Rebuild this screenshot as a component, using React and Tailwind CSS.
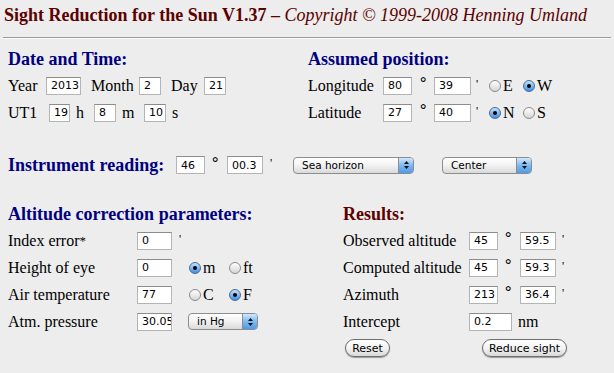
import React from "react";

const inputCls =
  "h-[18px] bg-white border border-[#b4b4b4] border-t-[#8c8c8c] flex items-center pl-[4px] overflow-hidden whitespace-nowrap text-[11px] leading-none text-black font-['DejaVu_Sans',sans-serif] shrink-0";

function Field({ w, v }) {
  return <span className={`${inputCls} ${w}`}>{v}</span>;
}

function Radio({ on }) {
  return on ? (
    <span className="w-[12px] h-[12px] rounded-full border border-[#4a6b96] bg-gradient-to-b from-[#c4e2fb] to-[#3d8fe6] flex items-center justify-center shrink-0">
      <span className="w-[4px] h-[4px] rounded-full bg-black" />
    </span>
  ) : (
    <span className="w-[12px] h-[12px] rounded-full border border-[#8a8a8a] bg-gradient-to-b from-[#ffffff] to-[#d6d6d6] shrink-0" />
  );
}

function Select({ w, v }) {
  return (
    <span
      className={`${w} h-[17px] rounded-[4px] border border-[#8d8d8d] flex items-stretch overflow-hidden shrink-0 bg-gradient-to-b from-[#ffffff] via-[#f2f2f2] to-[#d9d9d9]`}
    >
      <span className="flex-1 flex items-center pl-[8px] text-[10.5px] leading-none text-black font-['DejaVu_Sans',sans-serif] whitespace-nowrap">
        {v}
      </span>
      <span className="w-[15px] border-l border-[#8d8d8d] bg-gradient-to-b from-[#cfe8fd] via-[#7cb9f1] to-[#4e9ae8] flex flex-col items-center justify-center gap-[2px]">
        <svg width="5" height="3" viewBox="0 0 5 3">
          <path d="M2.5 0 L5 3 L0 3 Z" fill="#111" />
        </svg>
        <svg width="5" height="3" viewBox="0 0 5 3">
          <path d="M0 0 L5 0 L2.5 3 Z" fill="#111" />
        </svg>
      </span>
    </span>
  );
}

function Button({ w, v }) {
  return (
    <span
      className={`${w} h-[18px] rounded-full border border-[#6e6e6e] bg-gradient-to-b from-[#ffffff] via-[#f4f4f4] to-[#d8d8d8] flex items-center justify-center text-[11px] leading-none text-black font-['DejaVu_Sans',sans-serif] shadow-[0_1px_1px_rgba(0,0,0,0.35)]`}
    >
      {v}
    </span>
  );
}

const Row = ({ children, h = "h-[27px]" }) => (
  <div className={`flex items-center ${h}`}>{children}</div>
);

export default function App() {
  return (
    <div className="w-[614px] h-[373px] bg-[#ededed] overflow-hidden font-['Liberation_Serif',serif] text-[16px] text-black">
      {/* Title */}
      <div className="h-[37px] pl-[4px] pt-[5px] text-[18px] leading-[21px] text-[#5c0000] whitespace-nowrap">
        <span className="font-bold">Sight Reduction for the Sun V1.37 – </span>
        <span className="italic">Copyright © 1999-2008 Henning Umland</span>
      </div>
      <div className="mx-[3px] border-t border-[#9a9a9a] border-b border-b-[#fafafa]" />

      {/* Top section */}
      <div className="flex pl-[8px] mt-[7px]">
        <div className="w-[300px] flex flex-col">
          <div className="h-[26px] flex items-center text-[18px] font-bold text-[#000080]">
            Date and Time:
          </div>
          <Row>
            <span className="w-[38px]">Year</span>
            <Field w="w-[35px]" v="2013" />
            <span className="ml-[10px] w-[48px]">Month</span>
            <Field w="w-[22px]" v="2" />
            <span className="ml-[10px] w-[33px]">Day</span>
            <Field w="w-[22px]" v="21" />
          </Row>
          <Row>
            <span className="w-[41px]">UT1</span>
            <Field w="w-[21px]" v="19" />
            <span className="ml-[6px] w-[18px]">h</span>
            <Field w="w-[22px]" v="8" />
            <span className="ml-[6px] w-[22px]">m</span>
            <Field w="w-[22px]" v="10" />
            <span className="ml-[6px]">s</span>
          </Row>
        </div>
        <div className="flex flex-col">
          <div className="h-[26px] flex items-center text-[18px] font-bold text-[#000080]">
            Assumed position:
          </div>
          <Row>
            <span className="w-[75px]">Longitude</span>
            <Field w="w-[29px]" v="80" />
            <span className="w-[22px] pl-[8px] self-start pt-[3px] leading-[16px] font-bold">°</span>
            <Field w="w-[37px]" v="39" />
            <span className="w-[18px] pl-[5px] self-start pt-[4px] leading-[16px] text-[12px]">'</span>
            <span className="w-[34px] flex items-center gap-[2px]">
              <Radio />
              <span>E</span>
            </span>
            <span className="flex items-center gap-[2px]">
              <Radio on />
              <span>W</span>
            </span>
          </Row>
          <Row>
            <span className="w-[75px]">Latitude</span>
            <Field w="w-[29px]" v="27" />
            <span className="w-[22px] pl-[8px] self-start pt-[3px] leading-[16px] font-bold">°</span>
            <Field w="w-[37px]" v="40" />
            <span className="w-[18px] pl-[5px] self-start pt-[4px] leading-[16px] text-[12px]">'</span>
            <span className="w-[34px] flex items-center gap-[2px]">
              <Radio on />
              <span>N</span>
            </span>
            <span className="flex items-center gap-[2px]">
              <Radio />
              <span>S</span>
            </span>
          </Row>
        </div>
      </div>

      {/* Instrument reading */}
      <div className="mt-[25px] pl-[8px] h-[28px] flex items-center">
        <span className="w-[168px] text-[18px] font-bold text-[#000080] whitespace-nowrap">
          Instrument reading:
        </span>
        <Field w="w-[29px]" v="46" />
        <span className="w-[22px] pl-[7px] self-start pt-[4px] leading-[16px] font-bold">°</span>
        <Field w="w-[36px]" v="00.3" />
        <span className="w-[30px] pl-[7px] self-start pt-[4px] leading-[16px] text-[12px]">'</span>
        <Select w="w-[121px]" v="Sea horizon" />
        <span className="w-[28px]" />
        <Select w="w-[90px]" v="Center" />
      </div>

      {/* Bottom section */}
      <div className="flex pl-[8px] mt-[22px]">
        <div className="w-[335px] flex flex-col">
          <div className="h-[26px] flex items-center text-[18px] font-bold text-[#000080] whitespace-nowrap">
            Altitude correction parameters:
          </div>
          <Row>
            <span className="w-[129px]">
              Index error<sup className="text-[13px] relative -top-[1px]">*</sup>
            </span>
            <Field w="w-[35px]" v="0" />
            <span className="pl-[7px] self-start pt-[4px] leading-[16px] text-[12px]">'</span>
          </Row>
          <Row>
            <span className="w-[129px]">Height of eye</span>
            <Field w="w-[35px]" v="0" />
            <span className="w-[17px]" />
            <span className="w-[40px] flex items-center gap-[2px]">
              <Radio on />
              <span>m</span>
            </span>
            <span className="flex items-center gap-[2px]">
              <Radio />
              <span>ft</span>
            </span>
          </Row>
          <Row>
            <span className="w-[129px]">Air temperature</span>
            <Field w="w-[35px]" v="77" />
            <span className="w-[17px]" />
            <span className="w-[40px] flex items-center gap-[2px]">
              <Radio />
              <span>C</span>
            </span>
            <span className="flex items-center gap-[2px]">
              <Radio on />
              <span>F</span>
            </span>
          </Row>
          <Row>
            <span className="w-[129px]">Atm. pressure</span>
            <Field w="w-[35px]" v="30.05" />
            <span className="w-[16px]" />
            <Select w="w-[70px]" v="in Hg" />
          </Row>
        </div>
        <div className="flex flex-col">
          <div className="h-[26px] flex items-center text-[18px] font-bold text-[#5c0000]">
            Results:
          </div>
          <Row>
            <span className="w-[126px] whitespace-nowrap">Observed altitude</span>
            <Field w="w-[29px]" v="45" />
            <span className="w-[22px] pl-[7px] self-start pt-[3px] leading-[16px] font-bold">°</span>
            <Field w="w-[36px]" v="59.5" />
            <span className="pl-[6px] self-start pt-[4px] leading-[16px] text-[12px]">'</span>
          </Row>
          <Row>
            <span className="w-[126px] whitespace-nowrap">Computed altitude</span>
            <Field w="w-[29px]" v="45" />
            <span className="w-[22px] pl-[7px] self-start pt-[3px] leading-[16px] font-bold">°</span>
            <Field w="w-[36px]" v="59.3" />
            <span className="pl-[6px] self-start pt-[4px] leading-[16px] text-[12px]">'</span>
          </Row>
          <Row>
            <span className="w-[126px]">Azimuth</span>
            <Field w="w-[29px]" v="213" />
            <span className="w-[22px] pl-[7px] self-start pt-[3px] leading-[16px] font-bold">°</span>
            <Field w="w-[36px]" v="36.4" />
            <span className="pl-[6px] self-start pt-[4px] leading-[16px] text-[12px]">'</span>
          </Row>
          <Row>
            <span className="w-[126px]">Intercept</span>
            <Field w="w-[43px]" v="0.2" />
            <span className="ml-[6px]">nm</span>
          </Row>
          <Row h="h-[26px]">
            <span className="ml-[2px]">
              <Button w="w-[45px]" v="Reset" />
            </span>
            <span className="ml-[92px]">
              <Button w="w-[85px]" v="Reduce sight" />
            </span>
          </Row>
        </div>
      </div>
    </div>
  );
}
